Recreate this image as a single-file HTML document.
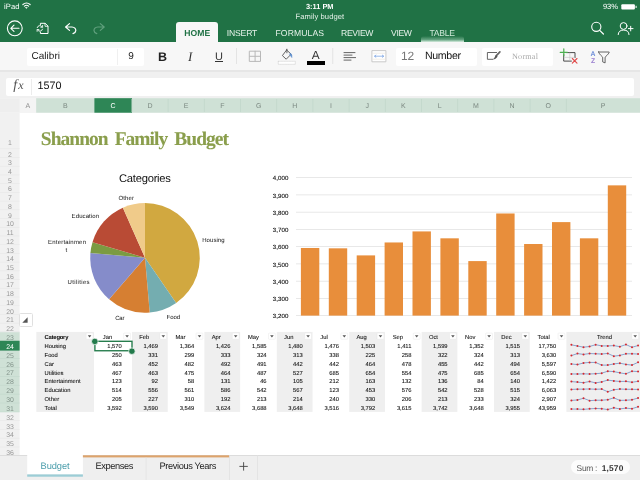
<!DOCTYPE html>
<html><head><meta charset="utf-8"><title>Family budget</title>
<style>
*{margin:0;padding:0;box-sizing:border-box}
html,body{width:640px;height:480px;overflow:hidden;background:#fff;font-family:"Liberation Sans",sans-serif}
.a{position:absolute}
.t{position:absolute;white-space:pre;text-rendering:geometricPrecision}
#w{position:absolute;left:0;top:0;width:640px;height:480px;will-change:transform}
</style></head><body><div id="w">
<div class="a" style="left:0px;top:0px;width:640px;height:42px;background:#207245;"></div>
<div class="a" style="left:421px;top:36px;width:43px;height:6px;background:linear-gradient(to bottom,rgba(255,255,255,0) 0%,rgba(200,235,215,.4) 60%,rgba(235,250,240,.9) 100%);border-radius:3px 3px 0 0"></div>
<div class="a" style="left:176px;top:22px;width:42px;height:21px;background:#f7f7f7;border-radius:3px 3px 0 0;"></div>
<div class="t" style="left:4.00px;top:2px;font-size:7.6px;line-height:9px;color:#fff;letter-spacing:0.096px;">iPad</div>
<div class="t" style="left:306.00px;top:2px;font-size:7.4px;line-height:9px;color:#fff;font-weight:bold;letter-spacing:-0.009px;">3:11 PM</div>
<div class="t" style="left:295.50px;top:12px;font-size:7.6px;line-height:9px;color:#e4f0e8;letter-spacing:0.081px;">Family budget</div>
<div class="t" style="left:603.00px;top:2px;font-size:7.6px;line-height:9px;color:#fff;letter-spacing:-0.105px;">93%</div>
<div class="t" style="left:184.20px;top:28px;font-size:8.6px;line-height:10px;color:#207245;font-weight:bold;letter-spacing:0.067px;">HOME</div>
<div class="t" style="left:226.80px;top:28px;font-size:8.6px;line-height:10px;color:#e6f2ea;letter-spacing:-0.176px;">INSERT</div>
<div class="t" style="left:275.50px;top:28px;font-size:8.6px;line-height:10px;color:#e6f2ea;letter-spacing:0.103px;">FORMULAS</div>
<div class="t" style="left:341.00px;top:28px;font-size:8.6px;line-height:10px;color:#e6f2ea;letter-spacing:-0.285px;">REVIEW</div>
<div class="t" style="left:391.00px;top:28px;font-size:8.6px;line-height:10px;color:#e6f2ea;letter-spacing:-0.327px;">VIEW</div>
<div class="t" style="left:429.50px;top:28px;font-size:8.6px;line-height:10px;color:#cfe9d9;letter-spacing:-0.277px;">TABLE</div>
<svg class="a" style="left:0;top:0" width="640" height="42" viewBox="0 0 640 42" fill="none" stroke="#fff" stroke-width="1" stroke-linecap="round" stroke-linejoin="round">
<!-- wifi -->
<g stroke-width="1.2"><path d="M22.9 4.5Q26.5 1.5 30.1 4.5"/><path d="M24.4 6.1Q26.5 4.4 28.6 6.1"/><path d="M25.7 7.6L26.5 8.5L27.3 7.6Q26.5 7 25.7 7.6Z" fill="#fff" stroke-width=".5"/></g>
<!-- back -->
<circle cx="14.8" cy="28.3" r="7.4" stroke-width="1.1"/><path d="M19 28.3H11M14 25.2L10.8 28.3L14 31.4" stroke-width="1.1"/>
<!-- file -->
<path d="M40.4 24.6V23.3H45.2L48 26.1V33.5H40.4V32.2"/><path d="M45 23.5V26.3H47.8" stroke-width=".8"/>
<path d="M37.2 27.6A2.8 2.8 0 0 1 42.3 27M42.5 29.2A2.8 2.8 0 0 1 37.4 29.8" stroke-width=".9"/><path d="M42.6 25.4V27.3H40.8M37.1 31.4V29.5H38.9" stroke-width=".8"/>
<!-- undo -->
<path d="M69.5 23.6L65.6 27L69.5 30.4M66 27H72Q75.8 27.3 75.8 30.6Q75.6 32.8 73 33.6" stroke-width="1.2"/>
<!-- redo -->
<path d="M100.3 23.6L104.2 27L100.3 30.4M103.8 27H97.8Q94 27.3 94 30.6Q94.2 32.8 96.8 33.6" stroke-width="1.2" stroke="#5f9f7c"/>
<!-- search -->
<circle cx="596.3" cy="26.8" r="4.6" stroke-width="1.1"/><path d="M599.7 30.3L603.4 34" stroke-width="1.2"/>
<!-- person -->
<circle cx="623.6" cy="26" r="3.4"/><path d="M618.2 34.6Q618.3 30.1 623.6 30.1Q628.9 30.1 629 34.6"/><path d="M628.4 28.6H633M630.7 26.3V30.9"/>
<!-- battery -->
<rect x="621.3" y="4.2" width="13.6" height="5.4" rx="1" fill="#fff" stroke="none"/><rect x="635.6" y="5.8" width="1" height="2.2" fill="#fff" stroke="none"/>
</svg>
<div class="a" style="left:0px;top:42px;width:640px;height:28px;background:#f7f7f7;"></div>
<div class="a" style="left:176px;top:41px;width:42px;height:3px;background:#f7f7f7;"></div>
<div class="a" style="left:0px;top:70px;width:640px;height:2px;background:#e6e6e6;"></div>
<div class="a" style="left:0px;top:72px;width:640px;height:26px;background:#f0f0f0;"></div>
<div class="a" style="left:27px;top:47.5px;width:117px;height:18px;background:#fff;border-radius:2px;"></div>
<div class="a" style="left:117px;top:48.5px;width:1px;height:16px;background:#f0f0f0;"></div>
<div class="t" style="left:31.50px;top:51px;font-size:10px;line-height:12px;color:#222;letter-spacing:0.027px;">Calibri</div>
<div class="t" style="left:128.20px;top:51px;font-size:10px;line-height:12px;color:#222;">9</div>
<div class="t" style="left:158.00px;top:50px;font-size:12.5px;line-height:14px;color:#222;font-weight:bold;">B</div>
<div class="t" style="left:188.00px;top:49px;font-size:13px;line-height:15px;color:#333;font-family:'Liberation Serif',serif;font-style:italic;">I</div>
<div class="t" style="left:215.00px;top:51px;font-size:11px;line-height:13px;color:#333;">U</div>
<div class="a" style="left:215px;top:61.3px;width:8.2px;height:0.8px;background:#333;"></div>
<div class="t" style="left:311.80px;top:48px;font-size:11.8px;line-height:14px;color:#333;">A</div>
<div class="a" style="left:307px;top:61px;width:17.5px;height:3.6px;background:#000;"></div>
<div class="a" style="left:396px;top:47.5px;width:81px;height:18px;background:#fff;border-radius:2px;"></div>
<div class="t" style="left:400.90px;top:49px;font-size:12px;line-height:14px;color:#777;">12</div>
<div class="t" style="left:425.00px;top:50px;font-size:10.6px;line-height:12px;color:#111;letter-spacing:-0.340px;">Number</div>
<div class="a" style="left:481.5px;top:47.5px;width:71px;height:18px;background:#fff;border-radius:2px;"></div>
<div class="t" style="left:512.00px;top:52px;font-size:8.2px;line-height:10px;color:#aaa;font-family:'Liberation Serif',serif;letter-spacing:0.190px;">Normal</div>
<div class="t" style="left:590.60px;top:51px;font-size:6.8px;line-height:8px;color:#6f8fd8;font-weight:bold;">A</div>
<div class="t" style="left:591.00px;top:58px;font-size:6.8px;line-height:8px;color:#9a7fd0;font-weight:bold;">Z</div>
<svg class="a" style="left:0;top:42px" width="640" height="30" viewBox="0 42 640 30" fill="none" stroke-linecap="round" stroke-linejoin="round">
<rect x="236" y="48" width="1" height="16" fill="#e4e4e4"/><rect x="332.25" y="48" width="1" height="16" fill="#e4e4e4"/>
<!-- borders -->
<g stroke="#b8b8b8" stroke-width="1"><rect x="249.7" y="51.2" width="10.8" height="10.2"/><path d="M255.1 51.2V61.4M249.7 56.3H260.5"/></g>
<!-- bucket -->
<path d="M286.6 50L282.4 55.6L286.2 59.2L291.2 54.2L286.6 50Z" stroke="#555" stroke-width=".9"/><path d="M286.9 49.2V52.8" stroke="#555" stroke-width=".9"/><path d="M290.6 53.2Q292.6 54.8 291.9 57.6Q290.6 55.6 289.6 54.8Z" fill="#5b8fd0" stroke="#5b8fd0" stroke-width=".5"/>
<rect x="278.3" y="61.3" width="17" height="3" fill="#fff" stroke="#cfcfcf" stroke-width=".5" stroke-dasharray="1 .6"/>
<!-- align -->
<g stroke="#555" stroke-width=".9"><path d="M344 52.6H355M344 55.1H352M344 57.6H355.6M344 60.1H351"/></g>
<!-- merge -->
<rect x="372.3" y="50.6" width="13.6" height="11.2" fill="#fff" stroke="#c4c4c4" stroke-width=".9"/><path d="M372.8 53.2H385.4M372.8 59.2H385.4" stroke="#e9e2d6" stroke-width=".6"/><path d="M374.6 56.2H383.6M375.9 55.1L374.6 56.2L375.9 57.3M382.3 55.1L383.6 56.2L382.3 57.3" stroke="#6d9be0" stroke-width=".7"/>
<!-- cell styles -->
<path d="M492.6 59.3H487.4V52.5H496.6" stroke="#555" stroke-width=".9"/><path d="M499.9 51.9L495.9 56.1" stroke="#666" stroke-width="1.7"/><path d="M496.3 55.3L494.9 56.7Q494.6 58.4 492.4 59.4Q495.4 59.6 496.6 57.8L497.6 56.6Z" fill="#555" stroke="none"/>
<!-- insert/delete -->
<path d="M563.7 54.6V61.1H571.4M566.6 52.6H575V57.6" stroke="#4a4a4a" stroke-width="1"/><path d="M564.2 57.4H574.6M569.8 53V60.6" stroke="#c2c2c2" stroke-width=".6"/><path d="M560.2 52.3H567.4M563.8 48.8V55.8" stroke="#4caf50" stroke-width="1.2"/><path d="M572.3 58.5L577 63.2M577 58.5L572.3 63.2" stroke="#e04a4a" stroke-width="1.1"/>
<!-- funnel -->
<path d="M598.6 52H609.2Q609.4 53.2 605.1 57.2V62.9L602.7 61.9V57.2Q598.4 53.2 598.6 52Z" stroke="#555" stroke-width=".9"/>
</svg>
<div class="a" style="left:6px;top:77.5px;width:628px;height:18px;background:#fff;border-radius:2px;"></div>
<div class="a" style="left:31px;top:78.5px;width:1px;height:16px;background:#ececec;"></div>
<div class="t" style="left:13.20px;top:78px;font-size:14px;line-height:16px;color:#555;font-family:'Liberation Serif',serif;font-style:italic;">f</div>
<div class="t" style="left:18.20px;top:78px;font-size:12px;line-height:14px;color:#555;font-family:'Liberation Serif',serif;font-style:italic;">x</div>
<div class="t" style="left:37.50px;top:80px;font-size:10.8px;line-height:13px;color:#111;letter-spacing:-0.008px;">1570</div>
<svg class="a" style="left:0;top:98px" width="640" height="357" viewBox="0 98 640 357"><rect x="0.00" y="98.20" width="640.00" height="14.50" fill="#eeeeee"/><rect x="19.60" y="98.20" width="16.60" height="14.50" fill="#f4f4f4"/><rect x="36.20" y="98.20" width="604.00" height="14.50" fill="#cfe1d6"/><rect x="94.40" y="98.20" width="37.60" height="14.50" fill="#2e8656"/><rect x="131.50" y="99.00" width="0.80" height="13.00" fill="#c2d7cb"/><rect x="167.70" y="99.00" width="0.80" height="13.00" fill="#c2d7cb"/><rect x="203.90" y="99.00" width="0.80" height="13.00" fill="#c2d7cb"/><rect x="240.10" y="99.00" width="0.80" height="13.00" fill="#c2d7cb"/><rect x="276.30" y="99.00" width="0.80" height="13.00" fill="#c2d7cb"/><rect x="312.50" y="99.00" width="0.80" height="13.00" fill="#c2d7cb"/><rect x="348.70" y="99.00" width="0.80" height="13.00" fill="#c2d7cb"/><rect x="384.90" y="99.00" width="0.80" height="13.00" fill="#c2d7cb"/><rect x="421.10" y="99.00" width="0.80" height="13.00" fill="#c2d7cb"/><rect x="457.30" y="99.00" width="0.80" height="13.00" fill="#c2d7cb"/><rect x="493.50" y="99.00" width="0.80" height="13.00" fill="#c2d7cb"/><rect x="529.70" y="99.00" width="0.80" height="13.00" fill="#c2d7cb"/><rect x="565.90" y="99.00" width="0.80" height="13.00" fill="#c2d7cb"/><rect x="0.00" y="112.70" width="19.60" height="342.30" fill="#f1f1f1"/><rect x="0.00" y="331.89" width="19.60" height="80.01" fill="#cfe1d6"/><rect x="0.00" y="340.75" width="19.60" height="9.85" fill="#2e8656"/><rect x="0.00" y="148.40" width="19.60" height="0.70" fill="#e8e8e8"/><rect x="0.00" y="157.12" width="19.60" height="0.70" fill="#e8e8e8"/><rect x="0.00" y="165.84" width="19.60" height="0.70" fill="#e8e8e8"/><rect x="0.00" y="174.56" width="19.60" height="0.70" fill="#e8e8e8"/><rect x="0.00" y="183.28" width="19.60" height="0.70" fill="#e8e8e8"/><rect x="0.00" y="192.01" width="19.60" height="0.70" fill="#e8e8e8"/><rect x="0.00" y="200.73" width="19.60" height="0.70" fill="#e8e8e8"/><rect x="0.00" y="209.45" width="19.60" height="0.70" fill="#e8e8e8"/><rect x="0.00" y="218.17" width="19.60" height="0.70" fill="#e8e8e8"/><rect x="0.00" y="226.89" width="19.60" height="0.70" fill="#e8e8e8"/><rect x="0.00" y="235.61" width="19.60" height="0.70" fill="#e8e8e8"/><rect x="0.00" y="244.33" width="19.60" height="0.70" fill="#e8e8e8"/><rect x="0.00" y="253.05" width="19.60" height="0.70" fill="#e8e8e8"/><rect x="0.00" y="261.77" width="19.60" height="0.70" fill="#e8e8e8"/><rect x="0.00" y="270.49" width="19.60" height="0.70" fill="#e8e8e8"/><rect x="0.00" y="279.21" width="19.60" height="0.70" fill="#e8e8e8"/><rect x="0.00" y="287.94" width="19.60" height="0.70" fill="#e8e8e8"/><rect x="0.00" y="296.66" width="19.60" height="0.70" fill="#e8e8e8"/><rect x="0.00" y="305.38" width="19.60" height="0.70" fill="#e8e8e8"/><rect x="0.00" y="314.10" width="19.60" height="0.70" fill="#e8e8e8"/><rect x="0.00" y="322.82" width="19.60" height="0.70" fill="#e8e8e8"/><rect x="0.00" y="331.54" width="19.60" height="0.70" fill="#e8e8e8"/><rect x="0.00" y="358.22" width="19.60" height="0.70" fill="#c4d9cd"/><rect x="0.00" y="367.11" width="19.60" height="0.70" fill="#c4d9cd"/><rect x="0.00" y="375.99" width="19.60" height="0.70" fill="#c4d9cd"/><rect x="0.00" y="384.88" width="19.60" height="0.70" fill="#c4d9cd"/><rect x="0.00" y="393.77" width="19.60" height="0.70" fill="#c4d9cd"/><rect x="0.00" y="402.66" width="19.60" height="0.70" fill="#c4d9cd"/><rect x="0.00" y="411.55" width="19.60" height="0.70" fill="#c4d9cd"/><rect x="0.00" y="420.31" width="19.60" height="0.70" fill="#e8e8e8"/><rect x="0.00" y="429.07" width="19.60" height="0.70" fill="#e8e8e8"/><rect x="0.00" y="437.83" width="19.60" height="0.70" fill="#e8e8e8"/><rect x="0.00" y="446.59" width="19.60" height="0.70" fill="#e8e8e8"/></svg>
<div class="t" style="left:25.57px;top:103px;font-size:7px;line-height:8px;color:#8a8a8a;">A</div>
<div class="t" style="left:62.97px;top:103px;font-size:7px;line-height:8px;color:#7d8a83;">B</div>
<div class="t" style="left:110.62px;top:103px;font-size:7px;line-height:8px;color:#fff;">C</div>
<div class="t" style="left:147.47px;top:103px;font-size:7px;line-height:8px;color:#7d8a83;">D</div>
<div class="t" style="left:183.87px;top:103px;font-size:7px;line-height:8px;color:#7d8a83;">E</div>
<div class="t" style="left:220.26px;top:103px;font-size:7px;line-height:8px;color:#7d8a83;">F</div>
<div class="t" style="left:255.88px;top:103px;font-size:7px;line-height:8px;color:#7d8a83;">G</div>
<div class="t" style="left:292.27px;top:103px;font-size:7px;line-height:8px;color:#7d8a83;">H</div>
<div class="t" style="left:330.03px;top:103px;font-size:7px;line-height:8px;color:#7d8a83;">I</div>
<div class="t" style="left:365.45px;top:103px;font-size:7px;line-height:8px;color:#7d8a83;">J</div>
<div class="t" style="left:401.07px;top:103px;font-size:7px;line-height:8px;color:#7d8a83;">K</div>
<div class="t" style="left:437.65px;top:103px;font-size:7px;line-height:8px;color:#7d8a83;">L</div>
<div class="t" style="left:472.88px;top:103px;font-size:7px;line-height:8px;color:#7d8a83;">M</div>
<div class="t" style="left:509.47px;top:103px;font-size:7px;line-height:8px;color:#7d8a83;">N</div>
<div class="t" style="left:545.48px;top:103px;font-size:7px;line-height:8px;color:#7d8a83;">O</div>
<div class="t" style="left:600.82px;top:103px;font-size:7px;line-height:8px;color:#7d8a83;">P</div>
<div class="t" style="left:8.08px;top:140px;font-size:6.9px;line-height:8px;color:#999;">1</div>
<div class="t" style="left:8.08px;top:152px;font-size:6.9px;line-height:8px;color:#999;">2</div>
<div class="t" style="left:8.08px;top:160px;font-size:6.9px;line-height:8px;color:#999;">3</div>
<div class="t" style="left:8.08px;top:169px;font-size:6.9px;line-height:8px;color:#999;">4</div>
<div class="t" style="left:8.08px;top:178px;font-size:6.9px;line-height:8px;color:#999;">5</div>
<div class="t" style="left:8.08px;top:186px;font-size:6.9px;line-height:8px;color:#999;">6</div>
<div class="t" style="left:8.08px;top:195px;font-size:6.9px;line-height:8px;color:#999;">7</div>
<div class="t" style="left:8.08px;top:204px;font-size:6.9px;line-height:8px;color:#999;">8</div>
<div class="t" style="left:8.08px;top:213px;font-size:6.9px;line-height:8px;color:#999;">9</div>
<div class="t" style="left:6.16px;top:221px;font-size:6.9px;line-height:8px;color:#999;">10</div>
<div class="t" style="left:6.42px;top:230px;font-size:6.9px;line-height:8px;color:#999;">11</div>
<div class="t" style="left:6.16px;top:239px;font-size:6.9px;line-height:8px;color:#999;">12</div>
<div class="t" style="left:6.16px;top:248px;font-size:6.9px;line-height:8px;color:#999;">13</div>
<div class="t" style="left:6.16px;top:256px;font-size:6.9px;line-height:8px;color:#999;">14</div>
<div class="t" style="left:6.16px;top:265px;font-size:6.9px;line-height:8px;color:#999;">15</div>
<div class="t" style="left:6.16px;top:274px;font-size:6.9px;line-height:8px;color:#999;">16</div>
<div class="t" style="left:6.16px;top:282px;font-size:6.9px;line-height:8px;color:#999;">17</div>
<div class="t" style="left:6.16px;top:291px;font-size:6.9px;line-height:8px;color:#999;">18</div>
<div class="t" style="left:6.16px;top:300px;font-size:6.9px;line-height:8px;color:#999;">19</div>
<div class="t" style="left:6.16px;top:309px;font-size:6.9px;line-height:8px;color:#999;">20</div>
<div class="t" style="left:6.16px;top:317px;font-size:6.9px;line-height:8px;color:#999;">21</div>
<div class="t" style="left:6.16px;top:326px;font-size:6.9px;line-height:8px;color:#999;">22</div>
<div class="t" style="left:6.16px;top:335px;font-size:6.9px;line-height:8px;color:#84958c;">23</div>
<div class="t" style="left:6.16px;top:344px;font-size:6.9px;line-height:8px;color:#fff;">24</div>
<div class="t" style="left:6.16px;top:353px;font-size:6.9px;line-height:8px;color:#84958c;">25</div>
<div class="t" style="left:6.16px;top:362px;font-size:6.9px;line-height:8px;color:#84958c;">26</div>
<div class="t" style="left:6.16px;top:370px;font-size:6.9px;line-height:8px;color:#84958c;">27</div>
<div class="t" style="left:6.16px;top:379px;font-size:6.9px;line-height:8px;color:#84958c;">28</div>
<div class="t" style="left:6.16px;top:388px;font-size:6.9px;line-height:8px;color:#84958c;">29</div>
<div class="t" style="left:6.16px;top:397px;font-size:6.9px;line-height:8px;color:#84958c;">30</div>
<div class="t" style="left:6.16px;top:406px;font-size:6.9px;line-height:8px;color:#84958c;">31</div>
<div class="t" style="left:6.16px;top:415px;font-size:6.9px;line-height:8px;color:#999;">32</div>
<div class="t" style="left:6.16px;top:424px;font-size:6.9px;line-height:8px;color:#999;">33</div>
<div class="t" style="left:6.16px;top:432px;font-size:6.9px;line-height:8px;color:#999;">34</div>
<div class="t" style="left:6.16px;top:441px;font-size:6.9px;line-height:8px;color:#999;">35</div>
<div class="t" style="left:6.16px;top:450px;font-size:6.9px;line-height:8px;color:#999;">36</div>
<div class="t" style="left:40.80px;top:129px;font-size:19.4px;line-height:22px;color:#8a9e4c;font-family:'Liberation Serif',serif;font-weight:bold;letter-spacing:-0.926px;word-spacing:3.1px;-webkit-text-stroke:.1px #8a9e4c;">Shannon Family Budget</div>
<div class="a" style="left:18.5px;top:313px;width:14.4px;height:14.4px;background:#fff;border:1px solid #e0e0e0;border-radius:1.5px;"></div>
<svg class="a" style="left:18px;top:313px" width="16" height="16"><path d="M4.3 9.8H9.6V4.2Z" fill="#555"/></svg>
<svg class="a" style="left:0;top:160px" width="240" height="170" viewBox="0 160 240 170"><path d="M145 257.8L145.00 203.00A54.8 54.8 0 0 1 176.15 302.89Z" fill="#d1a840"/><path d="M145 257.8L176.15 302.89A54.8 54.8 0 0 1 149.69 312.40Z" fill="#74adb0"/><path d="M145 257.8L149.69 312.40A54.8 54.8 0 0 1 109.10 299.20Z" fill="#d67f32"/><path d="M145 257.8L109.10 299.20A54.8 54.8 0 0 1 90.40 253.12Z" fill="#858cca"/><path d="M145 257.8L90.40 253.12A54.8 54.8 0 0 1 92.47 242.20Z" fill="#7b9b42"/><path d="M145 257.8L92.47 242.20A54.8 54.8 0 0 1 122.88 207.66Z" fill="#b94b35"/><path d="M145 257.8L122.88 207.66A54.8 54.8 0 0 1 145.00 203.00Z" fill="#f0cb8a"/></svg>
<div class="t" style="left:119.00px;top:173px;font-size:11.2px;line-height:13px;color:#111;letter-spacing:-0.240px;">Categories</div>
<div class="t" style="left:118.50px;top:196px;font-size:6.0px;line-height:7px;color:#111;letter-spacing:0.124px;">Other</div>
<div class="t" style="left:71.60px;top:214px;font-size:6.0px;line-height:7px;color:#111;letter-spacing:0.102px;">Education</div>
<div class="t" style="left:48.00px;top:240px;font-size:6.0px;line-height:7px;color:#111;letter-spacing:0.211px;">Entertainmen</div>
<div class="t" style="left:65.60px;top:248px;font-size:6.0px;line-height:7px;color:#111;">t</div>
<div class="t" style="left:67.60px;top:280px;font-size:6.0px;line-height:7px;color:#111;letter-spacing:0.333px;">Utilities</div>
<div class="t" style="left:115.20px;top:316px;font-size:6.0px;line-height:7px;color:#111;letter-spacing:-0.234px;">Car</div>
<div class="t" style="left:166.60px;top:315px;font-size:6.0px;line-height:7px;color:#111;letter-spacing:-0.025px;">Food</div>
<div class="t" style="left:202.20px;top:238px;font-size:6.0px;line-height:7px;color:#111;letter-spacing:0.065px;">Housing</div>
<svg class="a" style="left:240px;top:160px" width="400" height="170" viewBox="240 160 400 170"><rect x="296" y="177.30" width="336" height=".7" fill="#dedede"/><rect x="296" y="194.55" width="336" height=".7" fill="#dedede"/><rect x="296" y="211.80" width="336" height=".7" fill="#dedede"/><rect x="296" y="229.05" width="336" height=".7" fill="#dedede"/><rect x="296" y="246.30" width="336" height=".7" fill="#dedede"/><rect x="296" y="263.55" width="336" height=".7" fill="#dedede"/><rect x="296" y="280.80" width="336" height=".7" fill="#dedede"/><rect x="296" y="298.05" width="336" height=".7" fill="#dedede"/><rect x="296" y="315.30" width="336" height=".7" fill="#dedede"/><rect x="300.90" y="247.98" width="18.4" height="67.62" fill="#e88e3b"/><rect x="328.80" y="248.33" width="18.4" height="67.28" fill="#e88e3b"/><rect x="356.70" y="255.40" width="18.4" height="60.20" fill="#e88e3b"/><rect x="384.60" y="242.46" width="18.4" height="73.14" fill="#e88e3b"/><rect x="412.50" y="231.42" width="18.4" height="84.18" fill="#e88e3b"/><rect x="440.40" y="238.32" width="18.4" height="77.28" fill="#e88e3b"/><rect x="468.30" y="261.09" width="18.4" height="54.51" fill="#e88e3b"/><rect x="496.20" y="213.48" width="18.4" height="102.12" fill="#e88e3b"/><rect x="524.10" y="244.01" width="18.4" height="71.59" fill="#e88e3b"/><rect x="552.00" y="222.11" width="18.4" height="93.50" fill="#e88e3b"/><rect x="579.90" y="238.32" width="18.4" height="77.28" fill="#e88e3b"/><rect x="607.80" y="185.36" width="18.4" height="130.24" fill="#e88e3b"/></svg>
<div class="t" style="left:272.80px;top:175px;font-size:6.1px;line-height:7px;color:#111;letter-spacing:0.059px;-webkit-text-stroke:.12px #111;">4,000</div>
<div class="t" style="left:272.80px;top:193px;font-size:6.1px;line-height:7px;color:#111;letter-spacing:0.059px;-webkit-text-stroke:.12px #111;">3,900</div>
<div class="t" style="left:272.80px;top:210px;font-size:6.1px;line-height:7px;color:#111;letter-spacing:0.059px;-webkit-text-stroke:.12px #111;">3,800</div>
<div class="t" style="left:272.80px;top:227px;font-size:6.1px;line-height:7px;color:#111;letter-spacing:0.059px;-webkit-text-stroke:.12px #111;">3,700</div>
<div class="t" style="left:272.80px;top:244px;font-size:6.1px;line-height:7px;color:#111;letter-spacing:0.059px;-webkit-text-stroke:.12px #111;">3,600</div>
<div class="t" style="left:272.80px;top:262px;font-size:6.1px;line-height:7px;color:#111;letter-spacing:0.059px;-webkit-text-stroke:.12px #111;">3,500</div>
<div class="t" style="left:272.80px;top:279px;font-size:6.1px;line-height:7px;color:#111;letter-spacing:0.059px;-webkit-text-stroke:.12px #111;">3,400</div>
<div class="t" style="left:272.80px;top:296px;font-size:6.1px;line-height:7px;color:#111;letter-spacing:0.059px;-webkit-text-stroke:.12px #111;">3,300</div>
<div class="t" style="left:272.80px;top:313px;font-size:6.1px;line-height:7px;color:#111;letter-spacing:0.059px;-webkit-text-stroke:.12px #111;">3,200</div>
<svg class="a" style="left:0;top:330px" width="640" height="84" viewBox="0 330 640 84"><rect x="36.30" y="331.89" width="57.75" height="80.01" fill="#efefef"/><rect x="132.00" y="331.89" width="35.75" height="80.01" fill="#efefef"/><rect x="204.40" y="331.89" width="35.75" height="80.01" fill="#efefef"/><rect x="276.80" y="331.89" width="35.75" height="80.01" fill="#efefef"/><rect x="349.20" y="331.89" width="35.75" height="80.01" fill="#efefef"/><rect x="421.60" y="331.89" width="35.75" height="80.01" fill="#efefef"/><rect x="494.00" y="331.89" width="35.75" height="80.01" fill="#efefef"/><rect x="566.40" y="331.89" width="73.70" height="80.01" fill="#efefef"/></svg>
<div class="t" style="left:44.60px;top:335px;font-size:5.8px;line-height:7px;color:#000;font-weight:bold;letter-spacing:-0.191px;">Category</div>
<div class="t" style="left:102.80px;top:335px;font-size:5.8px;line-height:7px;color:#111;-webkit-text-stroke:.08px #111;">Jan</div>
<div class="t" style="left:139.30px;top:335px;font-size:5.8px;line-height:7px;color:#111;-webkit-text-stroke:.08px #111;">Feb</div>
<div class="t" style="left:175.50px;top:335px;font-size:5.8px;line-height:7px;color:#111;-webkit-text-stroke:.08px #111;">Mar</div>
<div class="t" style="left:211.70px;top:335px;font-size:5.8px;line-height:7px;color:#111;-webkit-text-stroke:.08px #111;">Apr</div>
<div class="t" style="left:247.90px;top:335px;font-size:5.8px;line-height:7px;color:#111;-webkit-text-stroke:.08px #111;">May</div>
<div class="t" style="left:284.10px;top:335px;font-size:5.8px;line-height:7px;color:#111;-webkit-text-stroke:.08px #111;">Jun</div>
<div class="t" style="left:320.30px;top:335px;font-size:5.8px;line-height:7px;color:#111;-webkit-text-stroke:.08px #111;">Jul</div>
<div class="t" style="left:356.50px;top:335px;font-size:5.8px;line-height:7px;color:#111;-webkit-text-stroke:.08px #111;">Aug</div>
<div class="t" style="left:392.70px;top:335px;font-size:5.8px;line-height:7px;color:#111;-webkit-text-stroke:.08px #111;">Sep</div>
<div class="t" style="left:428.90px;top:335px;font-size:5.8px;line-height:7px;color:#111;-webkit-text-stroke:.08px #111;">Oct</div>
<div class="t" style="left:465.10px;top:335px;font-size:5.8px;line-height:7px;color:#111;-webkit-text-stroke:.08px #111;">Nov</div>
<div class="t" style="left:501.30px;top:335px;font-size:5.8px;line-height:7px;color:#111;-webkit-text-stroke:.08px #111;">Dec</div>
<div class="t" style="left:537.50px;top:335px;font-size:5.8px;line-height:7px;color:#111;-webkit-text-stroke:.08px #111;">Total</div>
<div class="t" style="left:597.03px;top:335px;font-size:5.8px;line-height:7px;color:#111;-webkit-text-stroke:.08px #111;">Trend</div>
<svg class="a" style="left:0;top:330px" width="640" height="12" viewBox="0 330 640 12"><rect x="86.2" y="333.09" width="6.8" height="6.2" rx=".6" fill="#fff" stroke="#e2e2e2" stroke-width=".4"/><path d="M87.80 335.19h3.6l-1.8 2.3z" fill="#555"/><rect x="123.7" y="333.09" width="6.8" height="6.2" rx=".6" fill="#fff" stroke="#e2e2e2" stroke-width=".4"/><path d="M125.30 335.19h3.6l-1.8 2.3z" fill="#555"/><rect x="159.9" y="333.09" width="6.8" height="6.2" rx=".6" fill="#fff" stroke="#e2e2e2" stroke-width=".4"/><path d="M161.50 335.19h3.6l-1.8 2.3z" fill="#555"/><rect x="196.1" y="333.09" width="6.8" height="6.2" rx=".6" fill="#fff" stroke="#e2e2e2" stroke-width=".4"/><path d="M197.70 335.19h3.6l-1.8 2.3z" fill="#555"/><rect x="232.3" y="333.09" width="6.8" height="6.2" rx=".6" fill="#fff" stroke="#e2e2e2" stroke-width=".4"/><path d="M233.90 335.19h3.6l-1.8 2.3z" fill="#555"/><rect x="268.5" y="333.09" width="6.8" height="6.2" rx=".6" fill="#fff" stroke="#e2e2e2" stroke-width=".4"/><path d="M270.10 335.19h3.6l-1.8 2.3z" fill="#555"/><rect x="304.7" y="333.09" width="6.8" height="6.2" rx=".6" fill="#fff" stroke="#e2e2e2" stroke-width=".4"/><path d="M306.30 335.19h3.6l-1.8 2.3z" fill="#555"/><rect x="340.9" y="333.09" width="6.8" height="6.2" rx=".6" fill="#fff" stroke="#e2e2e2" stroke-width=".4"/><path d="M342.50 335.19h3.6l-1.8 2.3z" fill="#555"/><rect x="377.1" y="333.09" width="6.8" height="6.2" rx=".6" fill="#fff" stroke="#e2e2e2" stroke-width=".4"/><path d="M378.70 335.19h3.6l-1.8 2.3z" fill="#555"/><rect x="413.3" y="333.09" width="6.8" height="6.2" rx=".6" fill="#fff" stroke="#e2e2e2" stroke-width=".4"/><path d="M414.90 335.19h3.6l-1.8 2.3z" fill="#555"/><rect x="449.5" y="333.09" width="6.8" height="6.2" rx=".6" fill="#fff" stroke="#e2e2e2" stroke-width=".4"/><path d="M451.10 335.19h3.6l-1.8 2.3z" fill="#555"/><rect x="485.7" y="333.09" width="6.8" height="6.2" rx=".6" fill="#fff" stroke="#e2e2e2" stroke-width=".4"/><path d="M487.30 335.19h3.6l-1.8 2.3z" fill="#555"/><rect x="521.9" y="333.09" width="6.8" height="6.2" rx=".6" fill="#fff" stroke="#e2e2e2" stroke-width=".4"/><path d="M523.50 335.19h3.6l-1.8 2.3z" fill="#555"/><rect x="558.1" y="333.09" width="6.8" height="6.2" rx=".6" fill="#fff" stroke="#e2e2e2" stroke-width=".4"/><path d="M559.70 335.19h3.6l-1.8 2.3z" fill="#555"/><rect x="631.8" y="333.09" width="6.8" height="6.2" rx=".6" fill="#fff" stroke="#e2e2e2" stroke-width=".4"/><path d="M633.40 335.19h3.6l-1.8 2.3z" fill="#555"/></svg>
<div class="t" style="left:44.60px;top:344px;font-size:5.8px;line-height:7px;color:#111;-webkit-text-stroke:.08px #111;">Housing</div>
<div class="t" style="left:107.29px;top:344px;font-size:5.8px;line-height:7px;color:#111;-webkit-text-stroke:.08px #111;">1,570</div>
<div class="t" style="left:143.49px;top:344px;font-size:5.8px;line-height:7px;color:#111;-webkit-text-stroke:.08px #111;">1,469</div>
<div class="t" style="left:179.69px;top:344px;font-size:5.8px;line-height:7px;color:#111;-webkit-text-stroke:.08px #111;">1,364</div>
<div class="t" style="left:215.89px;top:344px;font-size:5.8px;line-height:7px;color:#111;-webkit-text-stroke:.08px #111;">1,426</div>
<div class="t" style="left:252.09px;top:344px;font-size:5.8px;line-height:7px;color:#111;-webkit-text-stroke:.08px #111;">1,585</div>
<div class="t" style="left:288.29px;top:344px;font-size:5.8px;line-height:7px;color:#111;-webkit-text-stroke:.08px #111;">1,480</div>
<div class="t" style="left:324.49px;top:344px;font-size:5.8px;line-height:7px;color:#111;-webkit-text-stroke:.08px #111;">1,476</div>
<div class="t" style="left:360.69px;top:344px;font-size:5.8px;line-height:7px;color:#111;-webkit-text-stroke:.08px #111;">1,503</div>
<div class="t" style="left:397.32px;top:344px;font-size:5.8px;line-height:7px;color:#111;-webkit-text-stroke:.08px #111;">1,411</div>
<div class="t" style="left:433.09px;top:344px;font-size:5.8px;line-height:7px;color:#111;-webkit-text-stroke:.08px #111;">1,599</div>
<div class="t" style="left:469.29px;top:344px;font-size:5.8px;line-height:7px;color:#111;-webkit-text-stroke:.08px #111;">1,352</div>
<div class="t" style="left:505.49px;top:344px;font-size:5.8px;line-height:7px;color:#111;-webkit-text-stroke:.08px #111;">1,515</div>
<div class="t" style="left:538.46px;top:344px;font-size:5.8px;line-height:7px;color:#111;-webkit-text-stroke:.08px #111;">17,750</div>
<div class="t" style="left:44.60px;top:353px;font-size:5.8px;line-height:7px;color:#111;-webkit-text-stroke:.08px #111;">Food</div>
<div class="t" style="left:112.12px;top:353px;font-size:5.8px;line-height:7px;color:#111;-webkit-text-stroke:.08px #111;">250</div>
<div class="t" style="left:148.32px;top:353px;font-size:5.8px;line-height:7px;color:#111;-webkit-text-stroke:.08px #111;">331</div>
<div class="t" style="left:184.52px;top:353px;font-size:5.8px;line-height:7px;color:#111;-webkit-text-stroke:.08px #111;">299</div>
<div class="t" style="left:220.72px;top:353px;font-size:5.8px;line-height:7px;color:#111;-webkit-text-stroke:.08px #111;">333</div>
<div class="t" style="left:256.92px;top:353px;font-size:5.8px;line-height:7px;color:#111;-webkit-text-stroke:.08px #111;">324</div>
<div class="t" style="left:293.12px;top:353px;font-size:5.8px;line-height:7px;color:#111;-webkit-text-stroke:.08px #111;">313</div>
<div class="t" style="left:329.32px;top:353px;font-size:5.8px;line-height:7px;color:#111;-webkit-text-stroke:.08px #111;">338</div>
<div class="t" style="left:365.52px;top:353px;font-size:5.8px;line-height:7px;color:#111;-webkit-text-stroke:.08px #111;">225</div>
<div class="t" style="left:401.72px;top:353px;font-size:5.8px;line-height:7px;color:#111;-webkit-text-stroke:.08px #111;">258</div>
<div class="t" style="left:437.92px;top:353px;font-size:5.8px;line-height:7px;color:#111;-webkit-text-stroke:.08px #111;">322</div>
<div class="t" style="left:474.12px;top:353px;font-size:5.8px;line-height:7px;color:#111;-webkit-text-stroke:.08px #111;">324</div>
<div class="t" style="left:510.32px;top:353px;font-size:5.8px;line-height:7px;color:#111;-webkit-text-stroke:.08px #111;">313</div>
<div class="t" style="left:541.69px;top:353px;font-size:5.8px;line-height:7px;color:#111;-webkit-text-stroke:.08px #111;">3,630</div>
<div class="t" style="left:44.60px;top:362px;font-size:5.8px;line-height:7px;color:#111;-webkit-text-stroke:.08px #111;">Car</div>
<div class="t" style="left:112.12px;top:362px;font-size:5.8px;line-height:7px;color:#111;-webkit-text-stroke:.08px #111;">463</div>
<div class="t" style="left:148.32px;top:362px;font-size:5.8px;line-height:7px;color:#111;-webkit-text-stroke:.08px #111;">452</div>
<div class="t" style="left:184.52px;top:362px;font-size:5.8px;line-height:7px;color:#111;-webkit-text-stroke:.08px #111;">482</div>
<div class="t" style="left:220.72px;top:362px;font-size:5.8px;line-height:7px;color:#111;-webkit-text-stroke:.08px #111;">492</div>
<div class="t" style="left:256.92px;top:362px;font-size:5.8px;line-height:7px;color:#111;-webkit-text-stroke:.08px #111;">491</div>
<div class="t" style="left:293.12px;top:362px;font-size:5.8px;line-height:7px;color:#111;-webkit-text-stroke:.08px #111;">442</div>
<div class="t" style="left:329.32px;top:362px;font-size:5.8px;line-height:7px;color:#111;-webkit-text-stroke:.08px #111;">442</div>
<div class="t" style="left:365.52px;top:362px;font-size:5.8px;line-height:7px;color:#111;-webkit-text-stroke:.08px #111;">464</div>
<div class="t" style="left:401.72px;top:362px;font-size:5.8px;line-height:7px;color:#111;-webkit-text-stroke:.08px #111;">478</div>
<div class="t" style="left:437.92px;top:362px;font-size:5.8px;line-height:7px;color:#111;-webkit-text-stroke:.08px #111;">455</div>
<div class="t" style="left:474.12px;top:362px;font-size:5.8px;line-height:7px;color:#111;-webkit-text-stroke:.08px #111;">442</div>
<div class="t" style="left:510.32px;top:362px;font-size:5.8px;line-height:7px;color:#111;-webkit-text-stroke:.08px #111;">494</div>
<div class="t" style="left:541.69px;top:362px;font-size:5.8px;line-height:7px;color:#111;-webkit-text-stroke:.08px #111;">5,597</div>
<div class="t" style="left:44.60px;top:371px;font-size:5.8px;line-height:7px;color:#111;-webkit-text-stroke:.08px #111;">Utilities</div>
<div class="t" style="left:112.12px;top:371px;font-size:5.8px;line-height:7px;color:#111;-webkit-text-stroke:.08px #111;">467</div>
<div class="t" style="left:148.32px;top:371px;font-size:5.8px;line-height:7px;color:#111;-webkit-text-stroke:.08px #111;">463</div>
<div class="t" style="left:184.52px;top:371px;font-size:5.8px;line-height:7px;color:#111;-webkit-text-stroke:.08px #111;">475</div>
<div class="t" style="left:220.72px;top:371px;font-size:5.8px;line-height:7px;color:#111;-webkit-text-stroke:.08px #111;">464</div>
<div class="t" style="left:256.92px;top:371px;font-size:5.8px;line-height:7px;color:#111;-webkit-text-stroke:.08px #111;">487</div>
<div class="t" style="left:293.12px;top:371px;font-size:5.8px;line-height:7px;color:#111;-webkit-text-stroke:.08px #111;">527</div>
<div class="t" style="left:329.32px;top:371px;font-size:5.8px;line-height:7px;color:#111;-webkit-text-stroke:.08px #111;">685</div>
<div class="t" style="left:365.52px;top:371px;font-size:5.8px;line-height:7px;color:#111;-webkit-text-stroke:.08px #111;">654</div>
<div class="t" style="left:401.72px;top:371px;font-size:5.8px;line-height:7px;color:#111;-webkit-text-stroke:.08px #111;">554</div>
<div class="t" style="left:437.92px;top:371px;font-size:5.8px;line-height:7px;color:#111;-webkit-text-stroke:.08px #111;">475</div>
<div class="t" style="left:474.12px;top:371px;font-size:5.8px;line-height:7px;color:#111;-webkit-text-stroke:.08px #111;">685</div>
<div class="t" style="left:510.32px;top:371px;font-size:5.8px;line-height:7px;color:#111;-webkit-text-stroke:.08px #111;">654</div>
<div class="t" style="left:541.69px;top:371px;font-size:5.8px;line-height:7px;color:#111;-webkit-text-stroke:.08px #111;">6,590</div>
<div class="t" style="left:44.60px;top:379px;font-size:5.8px;line-height:7px;color:#111;-webkit-text-stroke:.08px #111;">Entertainment</div>
<div class="t" style="left:112.12px;top:379px;font-size:5.8px;line-height:7px;color:#111;-webkit-text-stroke:.08px #111;">123</div>
<div class="t" style="left:151.55px;top:379px;font-size:5.8px;line-height:7px;color:#111;-webkit-text-stroke:.08px #111;">92</div>
<div class="t" style="left:187.75px;top:379px;font-size:5.8px;line-height:7px;color:#111;-webkit-text-stroke:.08px #111;">58</div>
<div class="t" style="left:220.72px;top:379px;font-size:5.8px;line-height:7px;color:#111;-webkit-text-stroke:.08px #111;">131</div>
<div class="t" style="left:260.15px;top:379px;font-size:5.8px;line-height:7px;color:#111;-webkit-text-stroke:.08px #111;">46</div>
<div class="t" style="left:293.12px;top:379px;font-size:5.8px;line-height:7px;color:#111;-webkit-text-stroke:.08px #111;">105</div>
<div class="t" style="left:329.32px;top:379px;font-size:5.8px;line-height:7px;color:#111;-webkit-text-stroke:.08px #111;">212</div>
<div class="t" style="left:365.52px;top:379px;font-size:5.8px;line-height:7px;color:#111;-webkit-text-stroke:.08px #111;">163</div>
<div class="t" style="left:401.72px;top:379px;font-size:5.8px;line-height:7px;color:#111;-webkit-text-stroke:.08px #111;">132</div>
<div class="t" style="left:437.92px;top:379px;font-size:5.8px;line-height:7px;color:#111;-webkit-text-stroke:.08px #111;">136</div>
<div class="t" style="left:477.35px;top:379px;font-size:5.8px;line-height:7px;color:#111;-webkit-text-stroke:.08px #111;">84</div>
<div class="t" style="left:510.32px;top:379px;font-size:5.8px;line-height:7px;color:#111;-webkit-text-stroke:.08px #111;">140</div>
<div class="t" style="left:541.69px;top:379px;font-size:5.8px;line-height:7px;color:#111;-webkit-text-stroke:.08px #111;">1,422</div>
<div class="t" style="left:44.60px;top:388px;font-size:5.8px;line-height:7px;color:#111;-webkit-text-stroke:.08px #111;">Education</div>
<div class="t" style="left:112.12px;top:388px;font-size:5.8px;line-height:7px;color:#111;-webkit-text-stroke:.08px #111;">514</div>
<div class="t" style="left:148.32px;top:388px;font-size:5.8px;line-height:7px;color:#111;-webkit-text-stroke:.08px #111;">556</div>
<div class="t" style="left:184.52px;top:388px;font-size:5.8px;line-height:7px;color:#111;-webkit-text-stroke:.08px #111;">561</div>
<div class="t" style="left:220.72px;top:388px;font-size:5.8px;line-height:7px;color:#111;-webkit-text-stroke:.08px #111;">586</div>
<div class="t" style="left:256.92px;top:388px;font-size:5.8px;line-height:7px;color:#111;-webkit-text-stroke:.08px #111;">542</div>
<div class="t" style="left:293.12px;top:388px;font-size:5.8px;line-height:7px;color:#111;-webkit-text-stroke:.08px #111;">567</div>
<div class="t" style="left:329.32px;top:388px;font-size:5.8px;line-height:7px;color:#111;-webkit-text-stroke:.08px #111;">123</div>
<div class="t" style="left:365.52px;top:388px;font-size:5.8px;line-height:7px;color:#111;-webkit-text-stroke:.08px #111;">453</div>
<div class="t" style="left:401.72px;top:388px;font-size:5.8px;line-height:7px;color:#111;-webkit-text-stroke:.08px #111;">576</div>
<div class="t" style="left:437.92px;top:388px;font-size:5.8px;line-height:7px;color:#111;-webkit-text-stroke:.08px #111;">542</div>
<div class="t" style="left:474.12px;top:388px;font-size:5.8px;line-height:7px;color:#111;-webkit-text-stroke:.08px #111;">528</div>
<div class="t" style="left:510.32px;top:388px;font-size:5.8px;line-height:7px;color:#111;-webkit-text-stroke:.08px #111;">515</div>
<div class="t" style="left:541.69px;top:388px;font-size:5.8px;line-height:7px;color:#111;-webkit-text-stroke:.08px #111;">6,063</div>
<div class="t" style="left:44.60px;top:397px;font-size:5.8px;line-height:7px;color:#111;-webkit-text-stroke:.08px #111;">Other</div>
<div class="t" style="left:112.12px;top:397px;font-size:5.8px;line-height:7px;color:#111;-webkit-text-stroke:.08px #111;">205</div>
<div class="t" style="left:148.32px;top:397px;font-size:5.8px;line-height:7px;color:#111;-webkit-text-stroke:.08px #111;">227</div>
<div class="t" style="left:184.52px;top:397px;font-size:5.8px;line-height:7px;color:#111;-webkit-text-stroke:.08px #111;">310</div>
<div class="t" style="left:220.72px;top:397px;font-size:5.8px;line-height:7px;color:#111;-webkit-text-stroke:.08px #111;">192</div>
<div class="t" style="left:256.92px;top:397px;font-size:5.8px;line-height:7px;color:#111;-webkit-text-stroke:.08px #111;">213</div>
<div class="t" style="left:293.12px;top:397px;font-size:5.8px;line-height:7px;color:#111;-webkit-text-stroke:.08px #111;">214</div>
<div class="t" style="left:329.32px;top:397px;font-size:5.8px;line-height:7px;color:#111;-webkit-text-stroke:.08px #111;">240</div>
<div class="t" style="left:365.52px;top:397px;font-size:5.8px;line-height:7px;color:#111;-webkit-text-stroke:.08px #111;">330</div>
<div class="t" style="left:401.72px;top:397px;font-size:5.8px;line-height:7px;color:#111;-webkit-text-stroke:.08px #111;">206</div>
<div class="t" style="left:437.92px;top:397px;font-size:5.8px;line-height:7px;color:#111;-webkit-text-stroke:.08px #111;">213</div>
<div class="t" style="left:474.12px;top:397px;font-size:5.8px;line-height:7px;color:#111;-webkit-text-stroke:.08px #111;">233</div>
<div class="t" style="left:510.32px;top:397px;font-size:5.8px;line-height:7px;color:#111;-webkit-text-stroke:.08px #111;">324</div>
<div class="t" style="left:541.69px;top:397px;font-size:5.8px;line-height:7px;color:#111;-webkit-text-stroke:.08px #111;">2,907</div>
<div class="t" style="left:44.60px;top:406px;font-size:5.8px;line-height:7px;color:#111;-webkit-text-stroke:.08px #111;">Total</div>
<div class="t" style="left:107.29px;top:406px;font-size:5.8px;line-height:7px;color:#111;-webkit-text-stroke:.08px #111;">3,592</div>
<div class="t" style="left:143.49px;top:406px;font-size:5.8px;line-height:7px;color:#111;-webkit-text-stroke:.08px #111;">3,590</div>
<div class="t" style="left:179.69px;top:406px;font-size:5.8px;line-height:7px;color:#111;-webkit-text-stroke:.08px #111;">3,549</div>
<div class="t" style="left:215.89px;top:406px;font-size:5.8px;line-height:7px;color:#111;-webkit-text-stroke:.08px #111;">3,624</div>
<div class="t" style="left:252.09px;top:406px;font-size:5.8px;line-height:7px;color:#111;-webkit-text-stroke:.08px #111;">3,688</div>
<div class="t" style="left:288.29px;top:406px;font-size:5.8px;line-height:7px;color:#111;-webkit-text-stroke:.08px #111;">3,648</div>
<div class="t" style="left:324.49px;top:406px;font-size:5.8px;line-height:7px;color:#111;-webkit-text-stroke:.08px #111;">3,516</div>
<div class="t" style="left:360.69px;top:406px;font-size:5.8px;line-height:7px;color:#111;-webkit-text-stroke:.08px #111;">3,792</div>
<div class="t" style="left:396.89px;top:406px;font-size:5.8px;line-height:7px;color:#111;-webkit-text-stroke:.08px #111;">3,615</div>
<div class="t" style="left:433.09px;top:406px;font-size:5.8px;line-height:7px;color:#111;-webkit-text-stroke:.08px #111;">3,742</div>
<div class="t" style="left:469.29px;top:406px;font-size:5.8px;line-height:7px;color:#111;-webkit-text-stroke:.08px #111;">3,648</div>
<div class="t" style="left:505.49px;top:406px;font-size:5.8px;line-height:7px;color:#111;-webkit-text-stroke:.08px #111;">3,955</div>
<div class="t" style="left:538.46px;top:406px;font-size:5.8px;line-height:7px;color:#111;-webkit-text-stroke:.08px #111;">43,959</div>
<svg class="a" style="left:560px;top:338px" width="80" height="76" viewBox="560 338 80 76"><polyline fill="none" stroke="#6d8fc4" stroke-width=".8" points="571.40,344.86 577.46,346.01 583.52,347.20 589.58,346.49 595.64,344.69 601.70,345.88 607.76,345.93 613.82,345.62 619.88,346.66 625.94,344.53 632.00,347.33 638.06,345.49"/><circle cx="571.40" cy="344.86" r="1" fill="#d8262c"/><circle cx="577.46" cy="346.01" r="1" fill="#d8262c"/><circle cx="583.52" cy="347.20" r="1" fill="#d8262c"/><circle cx="589.58" cy="346.49" r="1" fill="#d8262c"/><circle cx="595.64" cy="344.69" r="1" fill="#d8262c"/><circle cx="601.70" cy="345.88" r="1" fill="#d8262c"/><circle cx="607.76" cy="345.93" r="1" fill="#d8262c"/><circle cx="613.82" cy="345.62" r="1" fill="#d8262c"/><circle cx="619.88" cy="346.66" r="1" fill="#d8262c"/><circle cx="625.94" cy="344.53" r="1" fill="#d8262c"/><circle cx="632.00" cy="347.33" r="1" fill="#d8262c"/><circle cx="638.06" cy="345.49" r="1" fill="#d8262c"/><polyline fill="none" stroke="#6d8fc4" stroke-width=".8" points="571.40,355.60 577.46,353.60 583.52,354.39 589.58,353.55 595.64,353.77 601.70,354.04 607.76,353.42 613.82,356.22 619.88,355.40 625.94,353.82 632.00,353.77 638.06,354.04"/><circle cx="571.40" cy="355.60" r="1" fill="#d8262c"/><circle cx="577.46" cy="353.60" r="1" fill="#d8262c"/><circle cx="583.52" cy="354.39" r="1" fill="#d8262c"/><circle cx="589.58" cy="353.55" r="1" fill="#d8262c"/><circle cx="595.64" cy="353.77" r="1" fill="#d8262c"/><circle cx="601.70" cy="354.04" r="1" fill="#d8262c"/><circle cx="607.76" cy="353.42" r="1" fill="#d8262c"/><circle cx="613.82" cy="356.22" r="1" fill="#d8262c"/><circle cx="619.88" cy="355.40" r="1" fill="#d8262c"/><circle cx="625.94" cy="353.82" r="1" fill="#d8262c"/><circle cx="632.00" cy="353.77" r="1" fill="#d8262c"/><circle cx="638.06" cy="354.04" r="1" fill="#d8262c"/><polyline fill="none" stroke="#6d8fc4" stroke-width=".8" points="571.40,363.98 577.46,364.57 583.52,362.96 589.58,362.42 595.64,362.47 601.70,365.11 607.76,365.11 613.82,363.93 619.88,363.17 625.94,364.41 632.00,365.11 638.06,362.31"/><circle cx="571.40" cy="363.98" r="1" fill="#d8262c"/><circle cx="577.46" cy="364.57" r="1" fill="#d8262c"/><circle cx="583.52" cy="362.96" r="1" fill="#d8262c"/><circle cx="589.58" cy="362.42" r="1" fill="#d8262c"/><circle cx="595.64" cy="362.47" r="1" fill="#d8262c"/><circle cx="601.70" cy="365.11" r="1" fill="#d8262c"/><circle cx="607.76" cy="365.11" r="1" fill="#d8262c"/><circle cx="613.82" cy="363.93" r="1" fill="#d8262c"/><circle cx="619.88" cy="363.17" r="1" fill="#d8262c"/><circle cx="625.94" cy="364.41" r="1" fill="#d8262c"/><circle cx="632.00" cy="365.11" r="1" fill="#d8262c"/><circle cx="638.06" cy="362.31" r="1" fill="#d8262c"/><polyline fill="none" stroke="#6d8fc4" stroke-width=".8" points="571.40,373.95 577.46,374.00 583.52,373.85 589.58,373.99 595.64,373.70 601.70,373.19 607.76,371.20 613.82,371.59 619.88,372.85 625.94,373.85 632.00,371.20 638.06,371.59"/><circle cx="571.40" cy="373.95" r="1" fill="#d8262c"/><circle cx="577.46" cy="374.00" r="1" fill="#d8262c"/><circle cx="583.52" cy="373.85" r="1" fill="#d8262c"/><circle cx="589.58" cy="373.99" r="1" fill="#d8262c"/><circle cx="595.64" cy="373.70" r="1" fill="#d8262c"/><circle cx="601.70" cy="373.19" r="1" fill="#d8262c"/><circle cx="607.76" cy="371.20" r="1" fill="#d8262c"/><circle cx="613.82" cy="371.59" r="1" fill="#d8262c"/><circle cx="619.88" cy="372.85" r="1" fill="#d8262c"/><circle cx="625.94" cy="373.85" r="1" fill="#d8262c"/><circle cx="632.00" cy="371.20" r="1" fill="#d8262c"/><circle cx="638.06" cy="371.59" r="1" fill="#d8262c"/><polyline fill="none" stroke="#6d8fc4" stroke-width=".8" points="571.40,381.59 577.46,382.11 583.52,382.69 589.58,381.46 595.64,382.89 601.70,381.89 607.76,380.09 613.82,380.92 619.88,381.44 625.94,381.37 632.00,382.25 638.06,381.30"/><circle cx="571.40" cy="381.59" r="1" fill="#d8262c"/><circle cx="577.46" cy="382.11" r="1" fill="#d8262c"/><circle cx="583.52" cy="382.69" r="1" fill="#d8262c"/><circle cx="589.58" cy="381.46" r="1" fill="#d8262c"/><circle cx="595.64" cy="382.89" r="1" fill="#d8262c"/><circle cx="601.70" cy="381.89" r="1" fill="#d8262c"/><circle cx="607.76" cy="380.09" r="1" fill="#d8262c"/><circle cx="613.82" cy="380.92" r="1" fill="#d8262c"/><circle cx="619.88" cy="381.44" r="1" fill="#d8262c"/><circle cx="625.94" cy="381.37" r="1" fill="#d8262c"/><circle cx="632.00" cy="382.25" r="1" fill="#d8262c"/><circle cx="638.06" cy="381.30" r="1" fill="#d8262c"/><polyline fill="none" stroke="#6d8fc4" stroke-width=".8" points="571.40,389.41 577.46,389.16 583.52,389.13 589.58,388.98 595.64,389.24 601.70,389.09 607.76,391.78 613.82,389.78 619.88,389.04 625.94,389.24 632.00,389.33 638.06,389.41"/><circle cx="571.40" cy="389.41" r="1" fill="#d8262c"/><circle cx="577.46" cy="389.16" r="1" fill="#d8262c"/><circle cx="583.52" cy="389.13" r="1" fill="#d8262c"/><circle cx="589.58" cy="388.98" r="1" fill="#d8262c"/><circle cx="595.64" cy="389.24" r="1" fill="#d8262c"/><circle cx="601.70" cy="389.09" r="1" fill="#d8262c"/><circle cx="607.76" cy="391.78" r="1" fill="#d8262c"/><circle cx="613.82" cy="389.78" r="1" fill="#d8262c"/><circle cx="619.88" cy="389.04" r="1" fill="#d8262c"/><circle cx="625.94" cy="389.24" r="1" fill="#d8262c"/><circle cx="632.00" cy="389.33" r="1" fill="#d8262c"/><circle cx="638.06" cy="389.41" r="1" fill="#d8262c"/><polyline fill="none" stroke="#6d8fc4" stroke-width=".8" points="571.40,400.40 577.46,399.96 583.52,398.27 589.58,400.67 595.64,400.24 601.70,400.22 607.76,399.69 613.82,397.87 619.88,400.38 625.94,400.24 632.00,399.84 638.06,397.99"/><circle cx="571.40" cy="400.40" r="1" fill="#d8262c"/><circle cx="577.46" cy="399.96" r="1" fill="#d8262c"/><circle cx="583.52" cy="398.27" r="1" fill="#d8262c"/><circle cx="589.58" cy="400.67" r="1" fill="#d8262c"/><circle cx="595.64" cy="400.24" r="1" fill="#d8262c"/><circle cx="601.70" cy="400.22" r="1" fill="#d8262c"/><circle cx="607.76" cy="399.69" r="1" fill="#d8262c"/><circle cx="613.82" cy="397.87" r="1" fill="#d8262c"/><circle cx="619.88" cy="400.38" r="1" fill="#d8262c"/><circle cx="625.94" cy="400.24" r="1" fill="#d8262c"/><circle cx="632.00" cy="399.84" r="1" fill="#d8262c"/><circle cx="638.06" cy="397.99" r="1" fill="#d8262c"/><polyline fill="none" stroke="#6d8fc4" stroke-width=".8" points="571.40,409.07 577.46,409.08 583.52,409.35 589.58,408.87 595.64,408.46 601.70,408.71 607.76,409.56 613.82,407.80 619.88,408.93 625.94,408.12 632.00,408.71 638.06,406.76"/><circle cx="571.40" cy="409.07" r="1" fill="#d8262c"/><circle cx="577.46" cy="409.08" r="1" fill="#d8262c"/><circle cx="583.52" cy="409.35" r="1" fill="#d8262c"/><circle cx="589.58" cy="408.87" r="1" fill="#d8262c"/><circle cx="595.64" cy="408.46" r="1" fill="#d8262c"/><circle cx="601.70" cy="408.71" r="1" fill="#d8262c"/><circle cx="607.76" cy="409.56" r="1" fill="#d8262c"/><circle cx="613.82" cy="407.80" r="1" fill="#d8262c"/><circle cx="619.88" cy="408.93" r="1" fill="#d8262c"/><circle cx="625.94" cy="408.12" r="1" fill="#d8262c"/><circle cx="632.00" cy="408.71" r="1" fill="#d8262c"/><circle cx="638.06" cy="406.76" r="1" fill="#d8262c"/></svg>
<svg class="a" style="left:88px;top:335px" width="52" height="24" viewBox="88 335 52 24"><rect x="94.9" y="341.3" width="37.1" height="9.45" fill="none" stroke="#217a49" stroke-width="1.35"/><circle cx="94.8" cy="341.4" r="3.25" fill="#237a4b" stroke="#fff" stroke-width=".7"/><circle cx="131.9" cy="351.2" r="3.25" fill="#237a4b" stroke="#fff" stroke-width=".7"/></svg>
<div class="a" style="left:0px;top:455px;width:640px;height:25px;background:#efefef;"></div>
<div class="a" style="left:0px;top:454.6px;width:640px;height:0.8px;background:#dcdcdc;"></div>
<svg class="a" style="left:0;top:454px" width="300" height="26" viewBox="0 454 300 26"><rect x="27.2" y="455" width="55.7" height="19.5" fill="#fff"/><rect x="27.2" y="474.4" width="55.7" height="2.3" fill="#9ccdd6"/><rect x="82.9" y="455.3" width="146.4" height="2.1" fill="#dda36b"/><rect x="145.7" y="457.4" width=".7" height="22.6" fill="#e0e0e0"/><rect x="229" y="455" width=".7" height="25" fill="#e0e0e0"/><rect x="257" y="455" width=".7" height="25" fill="#e0e0e0"/></svg>
<div class="t" style="left:40.60px;top:461px;font-size:9.3px;line-height:11px;color:#4a9dab;letter-spacing:-0.095px;">Budget</div>
<div class="t" style="left:95.60px;top:461px;font-size:9.3px;line-height:11px;color:#222;letter-spacing:-0.420px;">Expenses</div>
<div class="t" style="left:159.40px;top:461px;font-size:9.3px;line-height:11px;color:#222;letter-spacing:-0.387px;">Previous Years</div>
<svg class="a" style="left:238px;top:461px" width="12" height="12"><path d="M1.4 5.4H9.8M5.6 1.2V9.6" stroke="#444" stroke-width=".9" fill="none"/></svg>
<div class="a" style="left:570.6px;top:460.2px;width:59.6px;height:14px;background:#fcfcfc;border-radius:7px;"></div>
<div class="t" style="left:576.60px;top:463px;font-size:8.4px;line-height:10px;color:#555;letter-spacing:-0.254px;">Sum : </div>
<div class="t" style="left:601.80px;top:463px;font-size:8.4px;line-height:10px;color:#333;font-weight:bold;letter-spacing:0.145px;">1,570</div>
</div></body></html>
